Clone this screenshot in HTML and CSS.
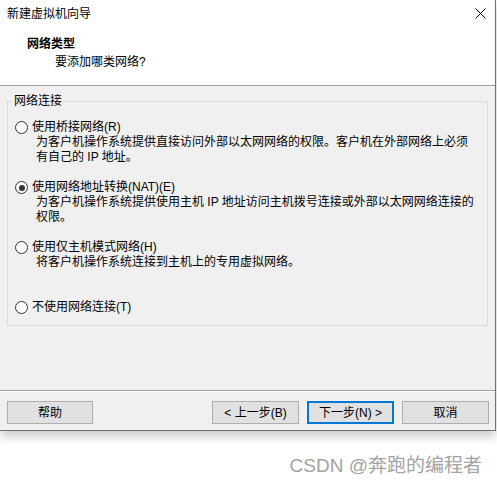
FILE: index.html
```html
<!DOCTYPE html>
<html lang="zh-CN">
<head>
<meta charset="utf-8">
<title>新建虚拟机向导</title>
<link rel="stylesheet" href="styles.css">
</head>
<body>
<div class="window">
  <div class="top">
    <div class="titlebar">
      <span class="title">新建虚拟机向导</span>
      <svg class="close" width="11" height="11" viewBox="0 0 11 11"><path d="M0.5 0.5L10.5 10.5M10.5 0.5L0.5 10.5" stroke="#000" stroke-width="1" fill="none"/></svg>
    </div>
    <div class="header">
      <div class="h-title">网络类型</div>
      <div class="h-sub">要添加哪类网络?</div>
    </div>
  </div>
  <div class="body">
    <fieldset class="group">
      <legend>网络连接</legend>
      <div class="opts">
        <div class="opt">
          <div class="opt-label"><span class="radio"></span><span>使用桥接网络(R)</span></div>
          <div class="opt-desc">为客户机操作系统提供直接访问外部以太网网络的权限。客户机在外部网络上必须<br>有自己的 IP 地址。</div>
        </div>
        <div class="opt">
          <div class="opt-label"><span class="radio checked"></span><span>使用网络地址转换(NAT)(E)</span></div>
          <div class="opt-desc">为客户机操作系统提供使用主机 IP 地址访问主机拨号连接或外部以太网网络连接的<br>权限。</div>
        </div>
        <div class="opt">
          <div class="opt-label"><span class="radio"></span><span>使用仅主机模式网络(H)</span></div>
          <div class="opt-desc">将客户机操作系统连接到主机上的专用虚拟网络。</div>
        </div>
        <div class="opt last">
          <div class="opt-label"><span class="radio"></span><span>不使用网络连接(T)</span></div>
        </div>
      </div>
    </fieldset>
  </div>
  <div class="footer">
    <button class="btn help">帮助</button>
    <div class="nav">
      <button class="btn">&lt; 上一步(B)</button>
      <button class="btn default">下一步(N) &gt;</button>
      <button class="btn">取消</button>
    </div>
  </div>
</div>
<div class="watermark">CSDN @奔跑的编程者</div>
</body>
</html>
```
FILE: styles.css
```css
body {
  margin: 0;
  background: #fff;
  font-family: "Liberation Sans", "Noto Sans CJK SC", sans-serif;
  font-size: 12px;
  color: #000;
}

.window {
  width: 496px;
  box-sizing: border-box;
  background: #f0f0f0;
  border-right: 1px solid #707070;
  border-bottom: 1px solid #707070;
  box-shadow: 0 5px 10px rgba(0, 0, 0, 0.22);
}

.top {
  height: 86px;
  box-sizing: border-box;
  background: #fff;
  border-bottom: 1px solid #a0a0a0;
}

.titlebar {
  height: 28px;
  display: flex;
  align-items: center;
  justify-content: space-between;
  padding: 0 9px 0 7px;
}

.title {
  line-height: 16px;
}

.close {
  display: block;
  margin-top: -2px;
}

.header {
  padding-left: 27px;
  padding-top: 8px;
}

.h-title {
  font-weight: bold;
  line-height: 16px;
}

.h-sub {
  margin-top: 2px;
  padding-left: 28px;
  line-height: 16px;
}

.body {
  height: 304px;
  box-sizing: border-box;
  padding: 7px 0 0 7px;
}

.group {
  width: 481px;
  box-sizing: border-box;
  margin: 0;
  padding: 0 0 10px 0;
  border: 1px solid #dcdcdc;
}

.group legend {
  margin-left: 5px;
  padding: 0 1px;
  line-height: 16px;
}

.opts {
  display: flex;
  flex-direction: column;
  gap: 15px;
  padding: 11px 0 0 7px;
}

.opt {
  min-height: 45px;
}

.opt.last {
  min-height: 0;
}

.opt-label {
  display: flex;
  align-items: center;
  gap: 4px;
  line-height: 15px;
}

.radio {
  width: 13px;
  height: 13px;
  box-sizing: border-box;
  border: 1px solid #333;
  border-radius: 50%;
  background: #fff;
  display: flex;
  align-items: center;
  justify-content: center;
  flex: none;
}

.radio.checked::after {
  content: "";
  width: 6px;
  height: 6px;
  border-radius: 50%;
  background: #333;
}

.opt-desc {
  padding-left: 21px;
  line-height: 15px;
  white-space: nowrap;
}

.footer {
  height: 40px;
  box-sizing: border-box;
  border-top: 1px solid #a0a0a0;
  box-shadow: inset 0 1px 0 #fff;
  padding: 10px 6px 0 7px;
  display: flex;
  justify-content: space-between;
  align-items: flex-start;
}

.nav {
  display: flex;
  gap: 8px;
}

.btn {
  width: 87px;
  height: 23px;
  box-sizing: border-box;
  background: #e1e1e1;
  border: 1px solid #adadad;
  font-family: inherit;
  font-size: 12px;
  color: #000;
  padding: 0;
  line-height: 16px;
}

.btn.help {
  width: 86px;
}

.btn.default {
  border: 2px solid #0078d7;
}

.watermark {
  margin-top: 23px;
  padding-right: 15px;
  text-align: right;
  font-family: "Liberation Sans", "Noto Sans CJK SC", sans-serif;
  font-size: 19px;
  line-height: 24px;
  color: #a3a3a3;
}
```
